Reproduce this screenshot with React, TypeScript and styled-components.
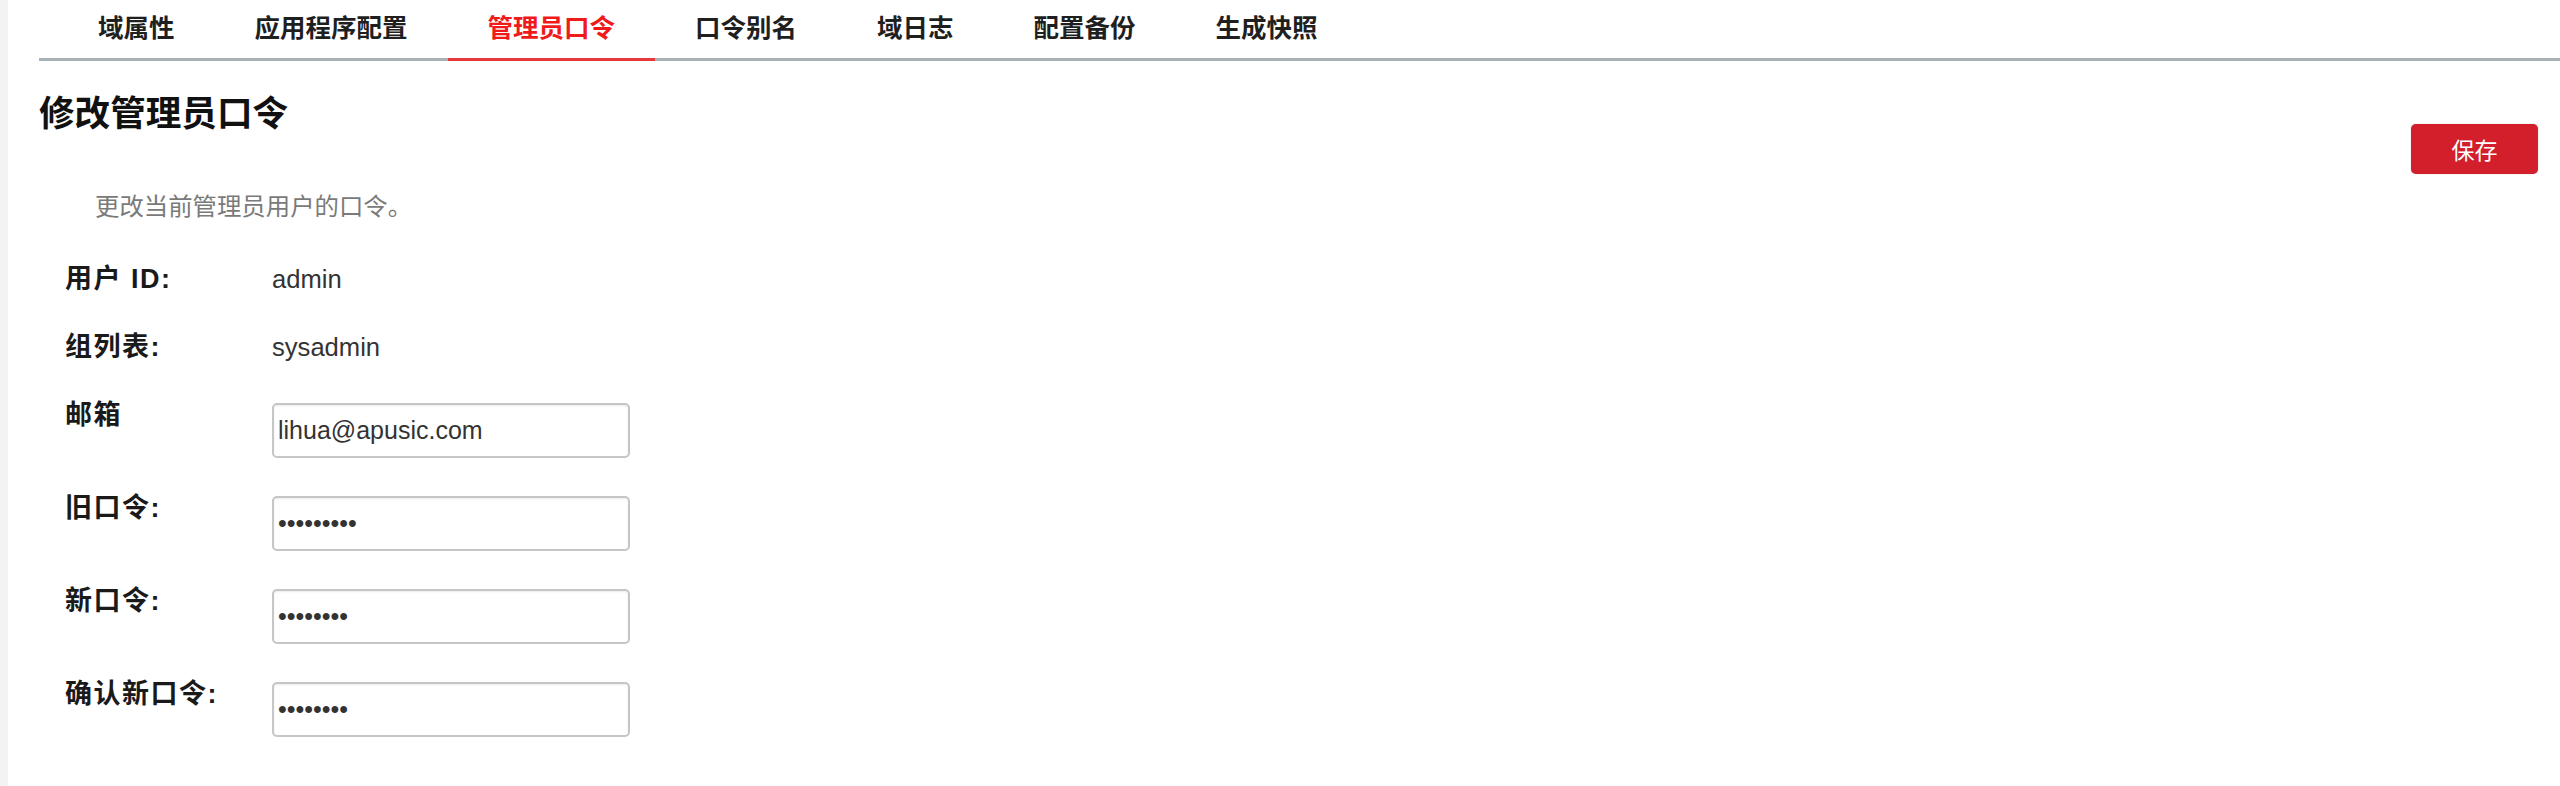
import React from "react";
import styled, { createGlobalStyle } from "styled-components";

const GlobalStyle = createGlobalStyle`
  html, body {
    margin: 0;
    padding: 0;
    background: #ffffff;
  }
  body {
    font-family: "Liberation Sans", "Noto Sans CJK SC", sans-serif;
    color: #1f1f1f;
  }
  * {
    box-sizing: border-box;
  }
`;

const Page = styled.div`
  display: flex;
  min-height: 100vh;
  background: #ffffff;
`;

const SideStrip = styled.div`
  flex: none;
  width: 8px;
  background: #f3f3f3;
`;

const Main = styled.main`
  flex: 1;
  min-width: 0;
  padding-left: 31px;
`;

const TabBar = styled.nav`
  display: flex;
  padding-left: 19px;
  border-bottom: 3px solid #a9b2b7;
`;

const Tab = styled.div<{ $active?: boolean }>`
  padding: 16px 40px 17px;
  margin-bottom: -3px;
  font-size: 25.5px;
  line-height: 25px;
  font-weight: 700;
  white-space: nowrap;
  cursor: pointer;
  color: ${(p) => (p.$active ? "#f01a1a" : "#1f1f1f")};
  border-bottom: 3px solid ${(p) => (p.$active ? "#e8383d" : "transparent")};
`;

const Content = styled.section`
  padding-right: 22px;
`;

const Header = styled.header`
  display: flex;
  justify-content: space-between;
  align-items: flex-start;
  margin-top: 36px;
`;

const Title = styled.h1`
  margin: 0;
  font-size: 35.6px;
  line-height: 35px;
  font-weight: 700;
  color: #111111;
`;

const SaveButton = styled.button`
  margin-top: 27px;
  width: 127px;
  height: 50px;
  border: none;
  border-radius: 5px;
  background: #d21f2b;
  color: #ffffff;
  font-family: inherit;
  font-size: 23px;
  cursor: pointer;
  box-shadow: 0 0 1px rgba(0, 0, 0, 0.4);
`;

const Description = styled.p`
  margin: 21px 0 0;
  padding-left: 56px;
  font-size: 24.4px;
  line-height: 24px;
  color: #7a7a7a;
`;

const Form = styled.div`
  display: flex;
  flex-direction: column;
  gap: 37px;
  margin-top: 47px;
  padding-left: 26px;
`;

const Row = styled.div`
  display: flex;
  align-items: flex-start;
  min-height: 31px;
`;

const Label = styled.div`
  flex: none;
  width: 207px;
  font-size: 27px;
  line-height: 26px;
  letter-spacing: 1.5px;
  font-weight: 700;
  color: #1a1a1a;
`;

const Value = styled.div`
  font-size: 25.6px;
  line-height: 26px;
  color: #333333;
`;

const Input = styled.input`
  margin-top: 1px;
  width: 358px;
  height: 55px;
  padding: 0 4px;
  border: 2px solid #c6c6c6;
  border-radius: 5px;
  background: #ffffff;
  font-family: "Liberation Sans", sans-serif;
  font-size: 25px;
  color: #333333;
  box-shadow: inset 0 1px 2px rgba(0, 0, 0, 0.08);
  outline: none;
`;

const tabs = ["域属性", "应用程序配置", "管理员口令", "口令别名", "域日志", "配置备份", "生成快照"];

type Field =
  | { label: string; kind: "text"; value: string }
  | { label: string; kind: "input"; type: "text" | "password"; value: string };

const fields: Field[] = [
  { label: "用户 ID:", kind: "text", value: "admin" },
  { label: "组列表:", kind: "text", value: "sysadmin" },
  { label: "邮箱", kind: "input", type: "text", value: "lihua@apusic.com" },
  { label: "旧口令:", kind: "input", type: "password", value: "123456789" },
  { label: "新口令:", kind: "input", type: "password", value: "12345678" },
  { label: "确认新口令:", kind: "input", type: "password", value: "12345678" },
];

export default function App() {
  return (
    <>
      <GlobalStyle />
      <Page>
        <SideStrip />
        <Main>
          <TabBar>
            {tabs.map((t) => (
              <Tab key={t} $active={t === "管理员口令"}>
                {t}
              </Tab>
            ))}
          </TabBar>
          <Content>
            <Header>
              <Title>修改管理员口令</Title>
              <SaveButton type="button">保存</SaveButton>
            </Header>
            <Description>更改当前管理员用户的口令。</Description>
            <Form>
              {fields.map((f) => (
                <Row key={f.label}>
                  <Label>{f.label}</Label>
                  {f.kind === "text" ? (
                    <Value>{f.value}</Value>
                  ) : (
                    <Input type={f.type} defaultValue={f.value} />
                  )}
                </Row>
              ))}
            </Form>
          </Content>
        </Main>
      </Page>
    </>
  );
}
